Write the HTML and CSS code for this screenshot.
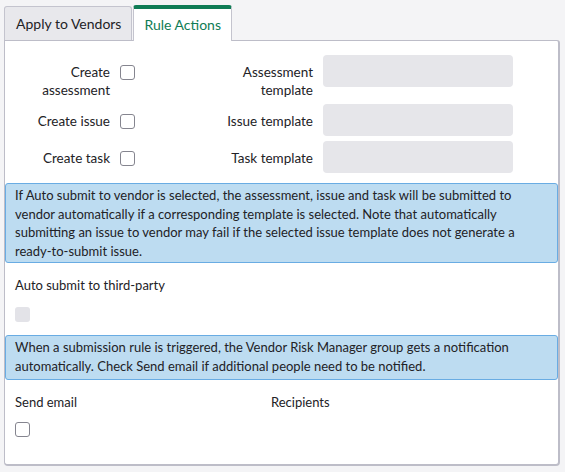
FILE: index.html
```html
<!DOCTYPE html>
<html lang="en">
<head>
<meta charset="UTF-8">
<meta name="viewport" content="width=device-width, initial-scale=1.0">
<title>Submission Rule</title>
<link rel="stylesheet" href="styles.css">
</head>
<body>
<div class="tabs">
  <div class="tab">Apply to Vendors</div>
  <div class="tab active">Rule Actions</div>
</div>

<div class="panel">
  <div class="actions">
    <div class="label">Create assessment</div>
    <span class="check"></span>
    <div class="label">Assessment template</div>
    <div class="select"></div>

    <div class="label">Create issue</div>
    <span class="check"></span>
    <div class="label">Issue template</div>
    <div class="select"></div>

    <div class="label">Create task</div>
    <span class="check"></span>
    <div class="label">Task template</div>
    <div class="select"></div>
  </div>

  <div class="notice notice-auto">
    If Auto submit to vendor is selected, the assessment, issue and task will be submitted to vendor automatically if a corresponding template is selected. Note that automatically submitting an issue to vendor may fail if the selected issue template does not generate a ready-to-submit issue.
  </div>

  <div class="field">
    <div class="field-label">Auto submit to third-party</div>
    <span class="check disabled"></span>
  </div>

  <div class="notice notice-email">
    When a submission rule is triggered, the Vendor Risk Manager group gets a notification automatically. Check Send email if additional people need to be notified.
  </div>

  <div class="email-row">
    <div class="field">
      <div class="field-label">Send email</div>
      <span class="check"></span>
    </div>
    <div class="field">
      <div class="field-label">Recipients</div>
    </div>
  </div>
</div>
</body>
</html>
```

FILE: styles.css
```css
body {
  margin: 0;
  padding: 5px 5px 0 4px;
  background-color: #f4f4f6;
  font-family: Lato, "Open Sans", sans-serif;
  font-size: 13px;
  color: #222226;
}

.tabs {
  display: flex;
  gap: 1px;
}

.tab {
  height: 34px;
  box-sizing: border-box;
  padding: 0 10px 0 11px;
  line-height: 33px;
  font-size: 14px;
  background-color: #e8e8ec;
  border: 1px solid #c4c4ce;
  border-bottom: none;
  border-radius: 3px 3px 0 0;
  margin-top: 1px;
}

.tab.active {
  position: relative;
  height: 36px;
  margin-top: 0;
  margin-bottom: -1px;
  padding: 0 10px;
  line-height: 31px;
  color: #0f7c55;
  background-color: #fff;
  border-top: 4px solid #0f7c55;
}

.panel {
  background-color: #fff;
  border: 1px solid #bdbdc8;
  border-right-width: 2px;
  border-bottom-width: 2px;
  border-radius: 0 3px 4px 4px;
  padding: 14px 0 27px;
}

.actions {
  display: grid;
  grid-template-columns: 105px 83px 100px 190px;
  column-gap: 10px;
  row-gap: 5px;
  align-items: start;
}

.label {
  text-align: right;
  padding-top: 8px;
  line-height: 18px;
  font-size: 13.5px;
}

.select {
  height: 32px;
  background-color: #e6e6ea;
  border-radius: 4px;
}

.check {
  display: block;
  width: 15px;
  height: 15px;
  box-sizing: border-box;
  border: 1px solid #85858f;
  border-radius: 3px;
  background-color: #fff;
}

.actions .check {
  margin-top: 10px;
}

.check.disabled {
  border: none;
  background-color: #e3e3e8;
}

.notice {
  background-color: #bddcf1;
  border: 1px solid #69ace3;
  border-radius: 3px;
  padding: 2px 9px 1px;
  line-height: 18.7px;
}

.notice-auto {
  margin-top: 10px;
}

.notice-email {
  margin-top: 13px;
  padding-bottom: 4px;
}

.field {
  padding: 13px 10px 0;
}

.field-label {
  line-height: 18px;
  margin-bottom: 13px;
}

.email-row {
  display: grid;
  grid-template-columns: 266px 1fr;
}

.email-row .field-label {
  margin-bottom: 11px;
}

.email-row .field + .field {
  padding-left: 0;
}
```
